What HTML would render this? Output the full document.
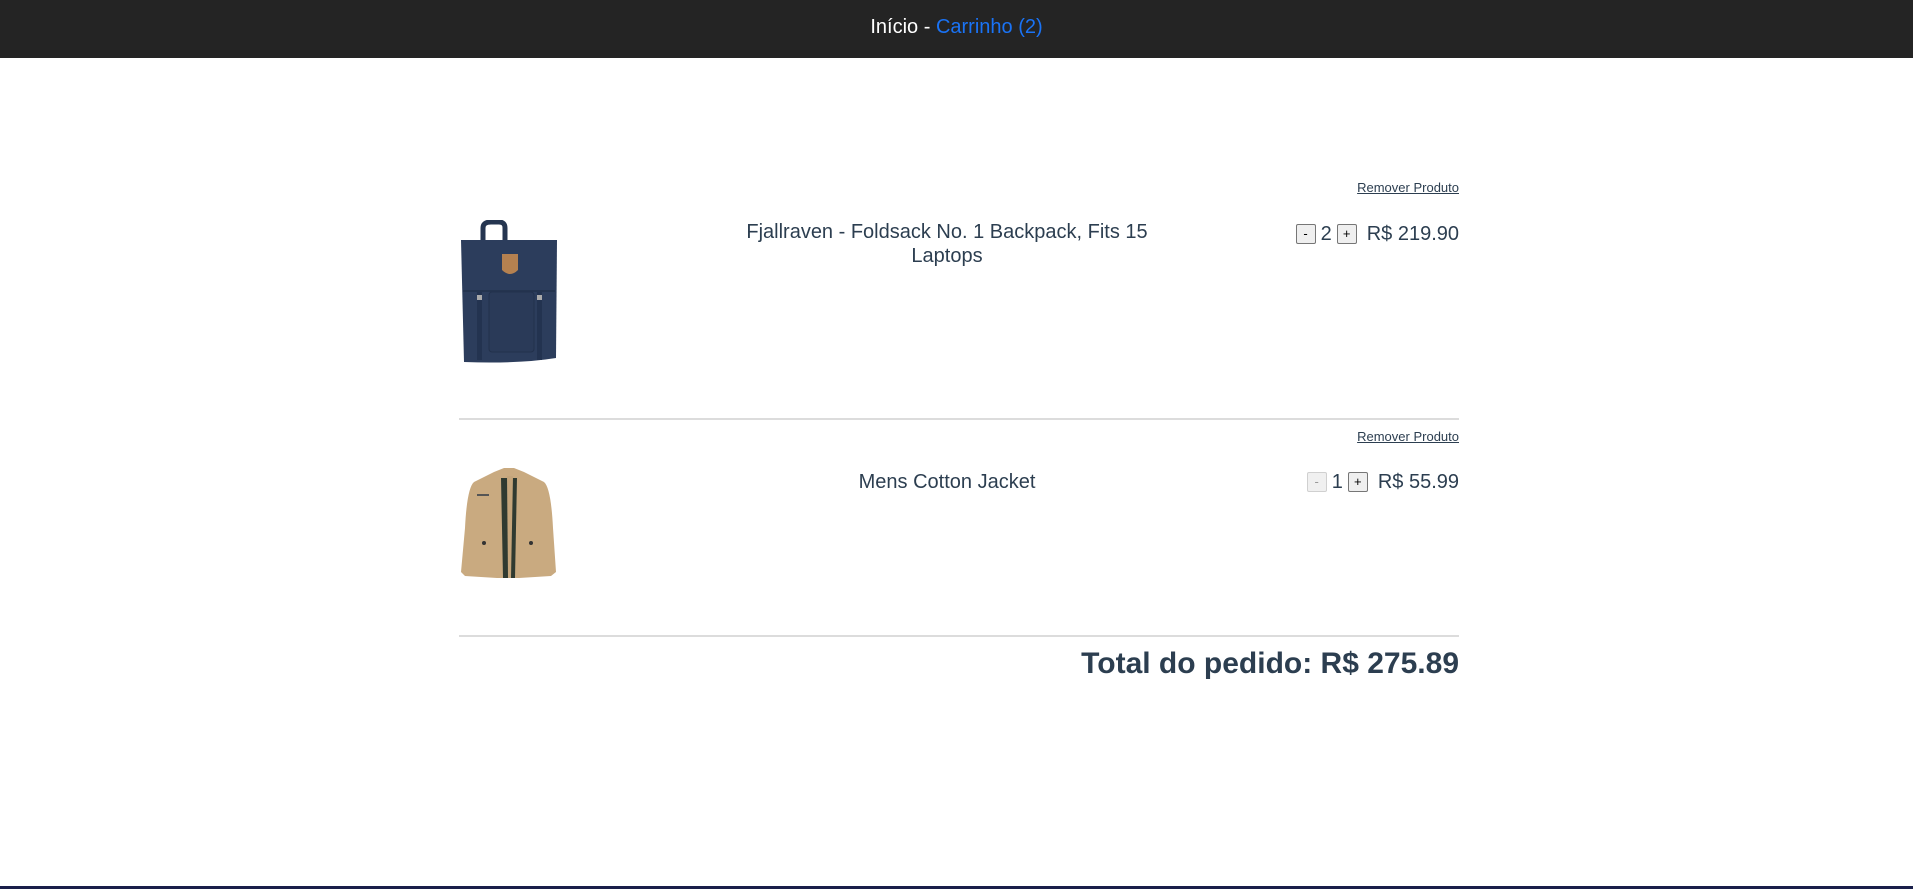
<!DOCTYPE html>
<html><head><meta charset="utf-8"><style>
*{margin:0;padding:0;box-sizing:border-box}
body{width:1913px;height:889px;background:#fff;font-family:"Liberation Sans",Arial,sans-serif;color:#2c3e50;position:relative;overflow:hidden}
.nav{position:absolute;left:0;top:0;width:1913px;height:58px;background:#242424;text-align:center;font-size:20px;line-height:54px;color:#fff}
.nav span{color:#1a73f5}
.a{position:absolute}
.rm{font-size:13px;text-decoration:underline;color:#2c3e50;right:454px}
.title{font-size:20px;line-height:24px;text-align:center;width:420px;left:737px}
.qty{right:454px;font-size:20px;display:flex;align-items:center;gap:5px;height:22px}
.b{width:20px;height:20px;border:1px solid #767676;border-radius:2px;background:#efefef;font-size:13px;line-height:18px;text-align:center;color:#000}
.b.d{border-color:#d0d0d0;color:#999;background:#f0f0f0}
.hr{left:459px;width:1000px;height:2px;background:#dcdcdc}
.total{right:454px;font-size:30px;font-weight:bold}
</style></head><body>
<div class="nav">Início - <span>Carrinho (2)</span></div>

<div class="a rm" style="top:180px">Remover Produto</div>
<svg class="a" style="left:459px;top:220px" width="100" height="146" viewBox="0 0 100 146">
<path d="M24 22 V8 Q24 2 32 2 H40 Q46 2 46 8 V22" fill="none" stroke="#253550" stroke-width="5"/>
<path d="M2 20 L98 20 L97 138 Q60 144 5 142 Z" fill="#2c3d5c"/>
<rect x="4" y="70" width="92" height="2" fill="#24344f"/>
<rect x="30" y="72" width="45" height="60" rx="3" fill="#2a3a58" stroke="#22314c"/>
<rect x="18" y="72" width="5" height="68" fill="#233350"/>
<rect x="78" y="72" width="5" height="68" fill="#233350"/>
<rect x="18" y="75" width="5" height="5" fill="#aaa"/>
<rect x="78" y="75" width="5" height="5" fill="#aaa"/>
<path d="M43 34 H59 V50 Q51 58 43 50 Z" fill="#b58150"/>
</svg>
<div class="a title" style="top:220px">Fjallraven - Foldsack No. 1 Backpack, Fits 15 Laptops</div>
<div class="a qty" style="top:223px"><div class="b">-</div><span>2</span><div class="b">+</div><span style="margin-left:5px">R$ 219.90</span></div>

<div class="a hr" style="top:418px"></div>

<div class="a rm" style="top:429px">Remover Produto</div>
<svg class="a" style="left:459px;top:468px" width="100" height="114" viewBox="0 0 100 114">
<path d="M35 4 L45 0 H55 L65 4 L85 14 Q92 20 94 60 L97 104 L92 108 L60 110 H38 L6 108 L2 104 L6 60 Q8 20 15 14 Z" fill="#c9aa80"/>
<path d="M42 10 H58 L56 110 H44 Z" fill="#2f3a30"/>
<path d="M48 8 L54 8 L52 110 L49 110 Z" fill="#c4a57b"/>
<rect x="18" y="26" width="12" height="2" fill="#555"/>
<circle cx="25" cy="75" r="2" fill="#333"/><circle cx="72" cy="75" r="2" fill="#333"/>
</svg>
<div class="a title" style="top:470px">Mens Cotton Jacket</div>
<div class="a qty" style="top:471px"><div class="b d">-</div><span>1</span><div class="b">+</div><span style="margin-left:5px">R$ 55.99</span></div>

<div class="a hr" style="top:635px"></div>
<div class="a total" style="top:647px">Total do pedido: R$ 275.89</div>

<div class="a" style="left:0;top:886px;width:1913px;height:3px;background:#1a1f4a"></div>
</body></html>
